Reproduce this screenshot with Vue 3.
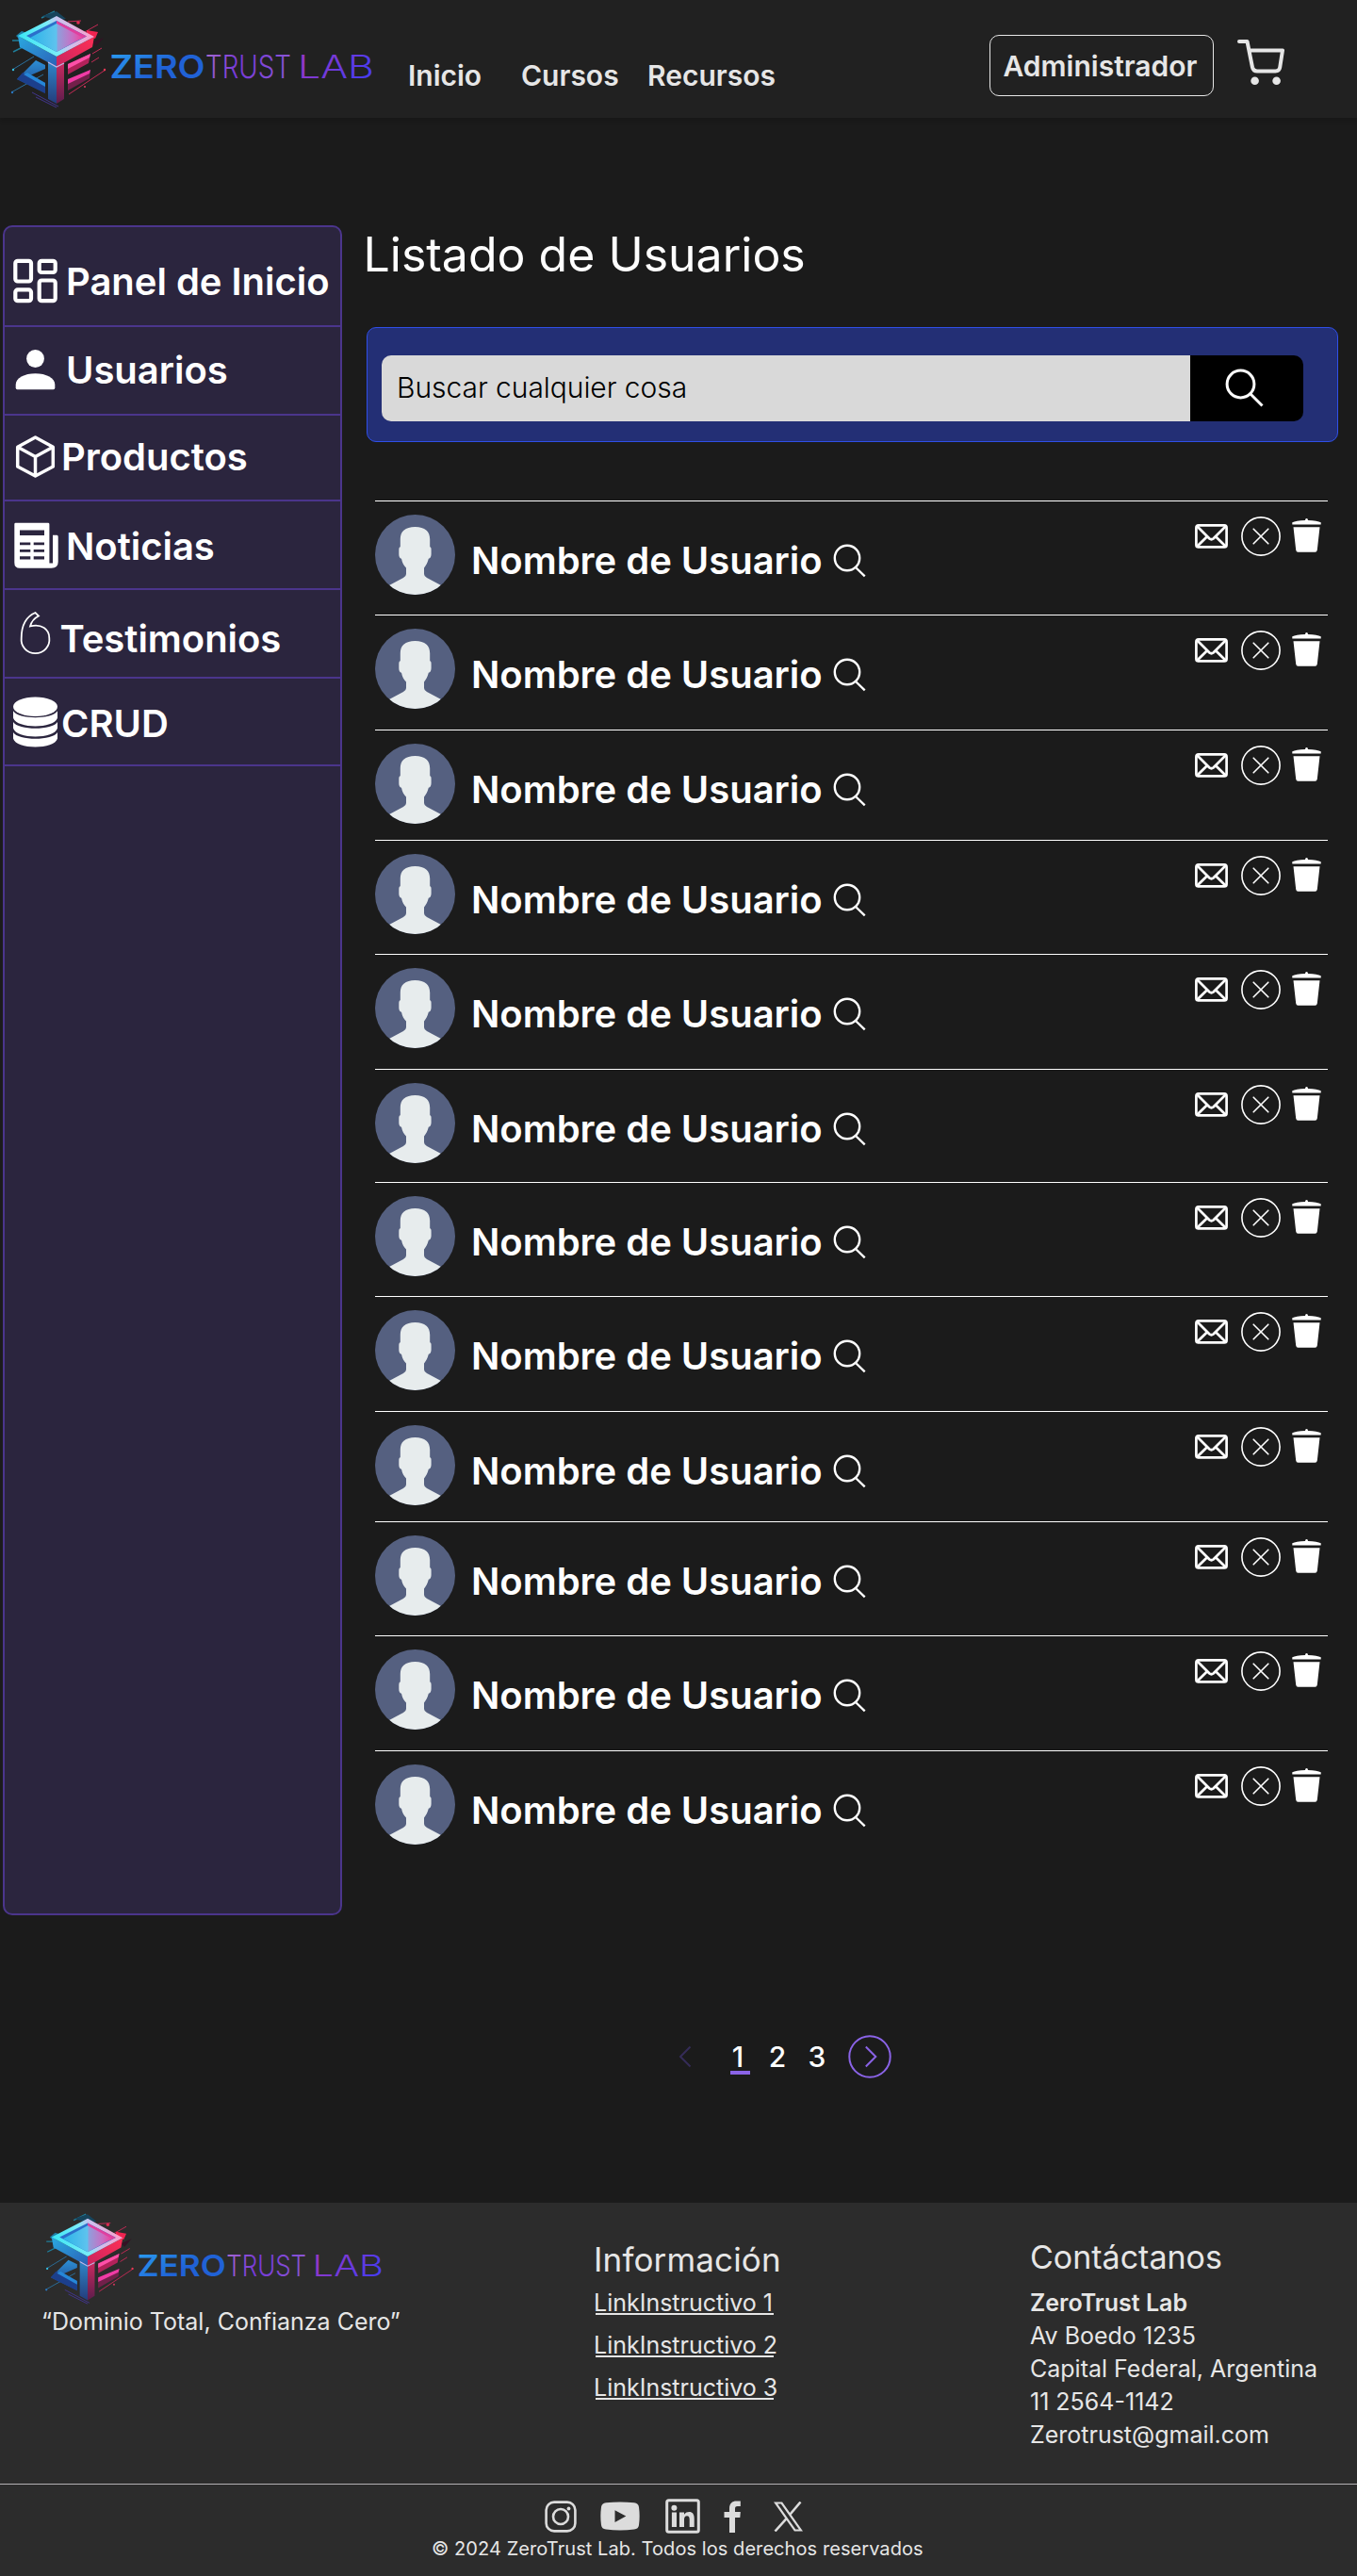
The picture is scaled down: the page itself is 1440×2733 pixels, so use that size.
<script setup>
const nav = ['Inicio', 'Cursos', 'Recursos']

const menu = [
  { id: 'panel', label: 'Panel de Inicio' },
  { id: 'usuarios', label: 'Usuarios' },
  { id: 'productos', label: 'Productos' },
  { id: 'noticias', label: 'Noticias' },
  { id: 'testimonios', label: 'Testimonios' },
  { id: 'crud', label: 'CRUD' },
]

const users = Array.from({ length: 12 }, (_, i) => ({ id: i + 1, name: 'Nombre de Usuario' }))

const links = ['LinkInstructivo 1', 'LinkInstructivo 2', 'LinkInstructivo 3']
const contact = ['Av Boedo 1235', 'Capital Federal, Argentina', '11 2564-1142', 'Zerotrust@gmail.com']
</script>

<template>
  <div class="page">
    <svg class="defs" width="0" height="0" aria-hidden="true">
      <defs>
        <linearGradient id="gFrame" x1="0" y1="0.6" x2="1" y2="0.4">
          <stop offset="0" stop-color="#35e6f5" /><stop offset="0.45" stop-color="#7cecf8" />
          <stop offset="0.6" stop-color="#c9c4f0" /><stop offset="1" stop-color="#ff9bc8" />
        </linearGradient>
        <linearGradient id="gInner" x1="0" y1="0.5" x2="1" y2="0.5">
          <stop offset="0" stop-color="#2bb4e8" /><stop offset="0.5" stop-color="#5fc3ee" />
          <stop offset="0.52" stop-color="#8f9fdc" /><stop offset="0.8" stop-color="#c86fc4" /><stop offset="1" stop-color="#f0409a" />
        </linearGradient>
        <linearGradient id="gLeft" x1="0" y1="0" x2="1" y2="1">
          <stop offset="0" stop-color="#2aa9e0" /><stop offset="1" stop-color="#2b62b8" />
        </linearGradient>
        <linearGradient id="gRight" x1="1" y1="0" x2="0" y2="1">
          <stop offset="0" stop-color="#ff2f55" /><stop offset="1" stop-color="#c92560" />
        </linearGradient>
        <linearGradient id="gArrow" x1="0.5" y1="0" x2="0.5" y2="1">
          <stop offset="0" stop-color="#2d8fd6" /><stop offset="1" stop-color="#1c3a80" />
        </linearGradient>
        <linearGradient id="gPillarL" x1="0" y1="0" x2="0" y2="1">
          <stop offset="0" stop-color="#2f86c8" /><stop offset="1" stop-color="#243c7c" />
        </linearGradient>
        <linearGradient id="gPillarR" x1="0" y1="0" x2="0" y2="1">
          <stop offset="0" stop-color="#c92a60" /><stop offset="1" stop-color="#5c1d4c" />
        </linearGradient>
        <linearGradient id="gZero" gradientUnits="userSpaceOnUse" x1="118" y1="56" x2="140" y2="92">
          <stop offset="0" stop-color="#2a9cf0" /><stop offset="1" stop-color="#2062d6" />
        </linearGradient>
        <linearGradient id="gTrust" gradientUnits="userSpaceOnUse" x1="217" y1="58" x2="308" y2="84">
          <stop offset="0" stop-color="#a76bd0" /><stop offset="0.4" stop-color="#7538d8" /><stop offset="1" stop-color="#8d5ad6" />
        </linearGradient>
        <linearGradient id="gLab" gradientUnits="userSpaceOnUse" x1="330" y1="56" x2="378" y2="92">
          <stop offset="0" stop-color="#9238c8" /><stop offset="1" stop-color="#4a3cf0" />
        </linearGradient>
      </defs>
      <symbol id="cube" viewBox="0 0 120 125">
        <g fill="none" stroke-width="1">
          <path d="M13 74 36 60M12 98 46 79" stroke="#2a6f9c" />
          <path d="M13 43h12M14 55l12-6M44 19l14-7" stroke="#1f7d99" stroke-width="1.4" />
          <path d="M88 35l16-9M72 23l14-1M98 57l10-6M97 66l8-5M73 100 112 74" stroke="#c42a55" />
          <path d="M34 98l28 15M38 103l22 11" stroke="#41358c" />
        </g>
        <path d="M45 17l15-5 10 8-10 2z" fill="#17445c" />
        <path d="M17 38l6-5 6 2-8 7z" fill="#1f7fa8" />
        <path d="M92 32l12 2-3 7-9-4z" fill="#f02450" />
        <path d="M98 45l12-5-8 9z" fill="#351225" />
        <circle cx="14" cy="74" r="1.2" fill="#35bfe0" /><circle cx="13" cy="98" r="1.2" fill="#2a76c0" />
        <circle cx="111" cy="74" r="1.2" fill="#ef3a55" /><circle cx="83" cy="24" r="1.8" fill="#e02a50" />
        <circle cx="90" cy="92" r="1" fill="#e03a60" />
        <path d="M19 38 60 60V71L21 50z" fill="url(#gLeft)" />
        <path d="M100 39 60 60V71L98 50z" fill="url(#gRight)" />
        <path d="M60 17 100 39 60 60 19 38z" fill="url(#gFrame)" />
        <path d="M60 22 92 38.5 60 55 28 38z" fill="#2b6fcb" />
        <path d="M60 22 92 38.5 84 42 60 26z" fill="#e0409f" />
        <path d="M60 25 88 40 60 55 32 40z" fill="url(#gInner)" />
        <path d="M38 64 48 69V73L32 80 48 88V99L18 84z" fill="url(#gArrow)" />
        <path d="M48 88V99L18 84 24 77z" fill="#1c3f8c" />
        <path d="M48 88v4L25 79l4-2z" fill="#2687d8" />
        <path d="M51 66 60 71V110L51 105z" fill="url(#gPillarL)" />
        <path d="M60 71 68 67V105L60 110z" fill="url(#gPillarR)" />
        <path d="M72 68 96 57 94 67 72 79z" fill="#b2225a" />
        <path d="M72 68 96 57 95 61 72 73z" fill="#ff4fa8" />
        <path d="M72 86 96 74 95 83 72 96z" fill="#72204a" />
        <path d="M72 84 96 74 95 78 72 89z" fill="#f03ba6" />
        <path d="M51 66 60 71 68 67" fill="none" stroke="#c6b8e8" stroke-width="1.2" />
      </symbol>
    </svg>

    <header class="topbar">
      <svg class="brand" viewBox="0 0 400 125" role="img" aria-label="ZeroTrust Lab">
        <use href="#cube" x="0" y="0" width="120" height="125" />
        <text class="logo-bold" x="116.500" y="83" textLength="101" lengthAdjust="spacingAndGlyphs" fill="url(#gZero)">ZERO</text>
        <text class="logo-thin" x="218" y="82.500" textLength="91" lengthAdjust="spacingAndGlyphs" fill="url(#gTrust)">TRUST</text>
        <text class="logo-thin" x="316" y="82.500" textLength="81" lengthAdjust="spacingAndGlyphs" fill="url(#gLab)">LAB</text>
      </svg>
      <nav class="nav">
        <a v-for="item in nav" :key="item">{{ item }}</a>
      </nav>
      <div class="admin">Administrador</div>
      <svg class="cart" viewBox="0 0 50 50">
        <path d="M2 3H10.500L16 30.500Q17 34.500 21 34.500H40.500Q44.500 34.500 45.200 30.500L48 12.500H13" fill="none" stroke="#e6e6e6" stroke-width="4" stroke-linecap="round" stroke-linejoin="round" />
        <circle cx="18.600" cy="44.700" r="4.300" fill="#e6e6e6" /><circle cx="41.600" cy="44.700" r="4.300" fill="#e6e6e6" />
      </svg>
    </header>

    <div class="body">
      <aside class="sidebar">
        <div v-for="m in menu" :key="m.id" class="entry" :class="m.id">
          <svg class="entry-icon" viewBox="0 0 50 56">
            <g v-if="m.id === 'panel'" fill="none" stroke="#fff" stroke-width="4.200">
              <rect x="4.300" y="5.800" width="16.700" height="21.700" rx="2.500" />
              <rect x="29.700" y="5.800" width="17" height="12.200" rx="2.500" />
              <rect x="4.300" y="36.400" width="16.700" height="11.800" rx="2.500" />
              <rect x="29.700" y="26.500" width="17" height="21.700" rx="2.500" />
            </g>
            <g v-else-if="m.id === 'usuarios'" fill="#fff">
              <circle cx="25.500" cy="15.500" r="9.400" />
              <path d="M4.700 43C4.700 36 14 31.200 25.500 31.200S46.300 36 46.300 43V46.500Q46.300 48.200 44.600 48.200H6.400Q4.700 48.200 4.700 46.500z" />
            </g>
            <path v-else-if="m.id === 'productos'" d="M25.500 7 44.300 17.200V38L25.500 48 6.700 38V17.200zM6.700 17.200 25.500 27.500 44.300 17.200M25.500 27.500V48" fill="none" stroke="#fff" stroke-width="3.500" stroke-linejoin="round" />
            <g v-else-if="m.id === 'noticias'">
              <path d="M4.500 2.800H39Q40.400 2.800 40.400 4.200V45.500H44V15.800H48.500Q49.700 15.800 49.700 17.500V44Q49.700 50.800 42.500 50.800H9Q3.300 50.800 3.300 45V4.200Q3.300 2.800 4.500 2.800z" fill="#fff" />
              <path d="M9 10.400H35V16H9zM9 23.500H20.300V26.300H9zM23.700 23.500H35V26.300H23.700zM9 31H20.300V33.800H9zM23.700 31H35V33.800H23.700zM9 38.200H20.300V41.500H9zM23.700 38.200H35V41.500H23.700z" fill="#2b253e" />
            </g>
            <path v-else-if="m.id === 'testimonios'" d="M25.500 0C15 4.500 10.700 15 10.700 27A14.900 14.500 0 1 0 40.300 27C40.300 17.500 32 11.500 20 14.500Q22 7 29 3.500z" fill="none" stroke="#fff" stroke-width="1.800" />
            <g v-else fill="#fff">
              <ellipse cx="25.500" cy="9.800" rx="23.500" ry="10.300" />
              <path d="M2 14.300C7 23.500 44 23.500 49 14.300V21.500C46 33.500 5 33.500 2 21.500z" />
              <path d="M2 26C7 35 44 35 49 26V32.500C46 44.500 5 44.500 2 32.500z" />
              <path d="M2 37C7 46 44 46 49 37V43.500C46 55.500 5 55.500 2 43.500z" />
            </g>
          </svg>
          <span class="entry-label">{{ m.label }}</span>
        </div>
      </aside>

      <main class="content">
        <h1 class="title">Listado de Usuarios</h1>

        <div class="search">
          <div class="search-input">Buscar cualquier cosa</div>
          <div class="search-btn">
            <svg viewBox="0 0 44 44"><circle cx="16.500" cy="16.500" r="14.400" /><path d="M27 27 39.500 39.500" /></svg>
          </div>
        </div>

        <ul class="users">
          <li v-for="u in users" :key="u.id" class="user">
            <svg class="avatar" viewBox="0 0 85 85">
              <clipPath :id="'av' + u.id"><circle cx="42.500" cy="42.500" r="42.500" /></clipPath>
              <circle cx="42.500" cy="42.500" r="42.500" fill="#556080" />
              <path :clip-path="'url(#av' + u.id + ')'" d="M42.500 13C53 13 58.200 18 58.200 26V34.200Q59.800 34.500 59.600 38V42Q59.500 46 56.800 46.800C55.500 51.500 54 54 52 56.500V63Q52 65.500 55 67L70 75V85H15V75L30 67Q33 65.500 33 63V56.500C30.500 54 29 51.500 28 46.800Q25.300 46 25.300 42V38Q25.200 34.500 26.800 34.200V26C26.800 18 32 13 42.500 13z" fill="#e7eced" />
            </svg>
            <span class="name">{{ u.name }}</span>
            <svg class="lens" viewBox="0 0 36 36"><circle cx="15" cy="15" r="13.200" /><path d="M24.500 25.500 33.700 34.300" /></svg>
            <div class="actions">
              <svg class="mail" viewBox="0 0 35 26" fill="none" stroke="#fff" stroke-width="2.700" stroke-linejoin="round">
                <rect x="1.400" y="1.400" width="32.200" height="23" rx="2.500" />
                <path d="M2 2 15.500 15.500Q17.500 17 19.500 15.500L33 2M2 24 13 13.300M33 24 22 13.300" />
              </svg>
              <svg class="block" viewBox="0 0 42 42" fill="none" stroke="#fff" stroke-width="1.600" stroke-linecap="round">
                <circle cx="21" cy="21" r="20.100" /><path d="M13.200 13.200 28.800 28.800M28.800 13.200 13.200 28.800" />
              </svg>
              <svg class="trash" viewBox="0 0 31 36" fill="#fff">
                <path d="M.3 4.300Q4 2 14 1.900Q14 0 15.500 0T17 1.900Q27 2 30.700 4.300V6.600H.3zM1.500 9.200H29.500L26.800 33.500Q26.500 35.800 24.500 35.800H6.500Q4.500 35.800 4.200 33.500z" />
              </svg>
            </div>
          </li>
        </ul>
      </main>
    </div>

    <div class="pager">
      <svg class="prev" viewBox="0 0 14 24"><path d="M12.500 1.500 2 12 12.500 22.500" /></svg>
      <span class="num current">1</span>
      <span class="num">2</span>
      <span class="num">3</span>
      <svg class="next" viewBox="0 0 46 46"><circle cx="23" cy="23" r="21.700" /><path d="M18.800 12.500 29.300 23 18.800 33.500" /></svg>
    </div>

    <footer class="footer">
      <div class="cols">
        <div class="about">
          <svg class="brand-sm" viewBox="0 0 400 125" role="img" aria-label="ZeroTrust Lab">
            <use href="#cube" x="0" y="0" width="120" height="125" />
            <text class="logo-bold" x="116.500" y="83" textLength="101" lengthAdjust="spacingAndGlyphs" fill="url(#gZero)">ZERO</text>
            <text class="logo-thin" x="218" y="82.500" textLength="91" lengthAdjust="spacingAndGlyphs" fill="url(#gTrust)">TRUST</text>
            <text class="logo-thin" x="316" y="82.500" textLength="81" lengthAdjust="spacingAndGlyphs" fill="url(#gLab)">LAB</text>
          </svg>
          <p class="motto">“Dominio Total, Confianza Cero”</p>
        </div>
        <div class="info">
          <h2>Información</h2>
          <a v-for="l in links" :key="l" class="link"><span>{{ l }}</span></a>
        </div>
        <div class="contact">
          <h2>Contáctanos</h2>
          <p class="strong">ZeroTrust Lab</p>
          <p v-for="c in contact" :key="c">{{ c }}</p>
        </div>
      </div>
      <div class="legal">
        <div class="social">
          <svg class="ig" viewBox="0 0 34 34" fill="none" stroke="#dcdcdc" stroke-width="2.600">
            <rect x="1.600" y="1.600" width="30.800" height="30.800" rx="8.500" /><circle cx="17" cy="17" r="8" /><circle cx="25.500" cy="8.500" r="1.900" fill="#dcdcdc" stroke="none" />
          </svg>
          <svg class="yt" viewBox="0 0 42 31">
            <path d="M6 1.300Q21-.5 36 1.300Q40.500 1.800 41 6Q42.300 15.500 41 25Q40.500 29 36 29.500Q21 31.300 6 29.500Q1.500 29 1 25Q-.3 15.500 1 6Q1.500 1.800 6 1.300z" fill="#dcdcdc" /><path d="M15.500 9.300 27.300 15.500 15.500 22z" fill="#2c2c2c" />
          </svg>
          <svg class="li" viewBox="0 0 37 37" fill="#dcdcdc">
            <rect x="1.700" y="1.700" width="33.600" height="33.600" rx="2" fill="none" stroke="#dcdcdc" stroke-width="3" />
            <circle cx="9.400" cy="9.800" r="3" /><path d="M6.900 14.500H12V30H6.900zM15 14.500H20V16.800C21.500 14.500 23.200 13.900 25.300 13.900C29 13.900 30.700 16.500 30.700 21V30H25.700V22C25.700 19.500 25 18.200 23 18.200S20 19.700 20 22V30H15z" />
          </svg>
          <svg class="fb" viewBox="0 0 18 34" fill="#dcdcdc">
            <path d="M6 34V18H.5V12H6V8.500C6 3 9 .5 13.500 .5H17.800V6H14.500C12.500 6 12 7 12 8.800V12H17.800L17.300 18H12V34z" />
          </svg>
          <svg class="tx" viewBox="0 0 31 32">
            <path d="M2 1.500H8.500L29 30.500H22.500z" fill="none" stroke="#dcdcdc" stroke-width="2.200" /><path d="M28.500 .5 17.500 13.500M13.300 18.300 1.500 31.500" stroke="#dcdcdc" stroke-width="2.600" fill="none" />
          </svg>
        </div>
        <p class="copy">© 2024 ZeroTrust Lab. Todos los derechos reservados</p>
      </div>
    </footer>
  </div>
</template>

<style>
html,
body {
  margin: 0;
  background: #1b1b1b;
}
</style>

<style scoped>
.page {
  width: 1440px;
  height: 2733px;
  display: flex;
  flex-direction: column;
  background: #1b1b1b;
  color: #fff;
  font-family: Inter, "Liberation Sans", sans-serif;
  overflow: hidden;
}
.defs { position: absolute; }
svg { display: block; flex: none; }
h1, h2, p, ul { margin: 0; padding: 0; }

/* Header */
.topbar {
  flex: none;
  height: 125px;
  display: flex;
  align-items: flex-start;
  background: #212121;
  box-shadow: 0 4px 4px rgba(0, 0, 0, 0.12);
  color: #e6e6e6;
  font-size: 30px;
  font-weight: 600;
  line-height: 36px;
}
.brand { width: 400px; height: 125px; }
.logo-bold, .logo-thin { font-size: 34px; font-family: Inter, sans-serif; }
.logo-bold { font-weight: 600; }
.logo-thin { font-weight: 300; }
.nav { display: flex; padding: 62px 0 0 33px; width: 618px; box-sizing: border-box; }
.nav a:nth-child(1) { width: 120px; }
.nav a:nth-child(2) { width: 134px; }
.admin, .nav a { white-space: nowrap; }
.admin {
  margin: 37px 0 0 32px;
  width: 238px;
  height: 65px;
  box-sizing: border-box;
  border: 1px solid #e6e6e6;
  border-radius: 10px;
  padding: 13.500px 0 0 13.500px;
}
.cart { width: 50px; height: 50px; margin: 41px 0 0 25px; }

/* Columns under the header */
.body {
  flex: none;
  display: flex;
  align-items: flex-start;
  height: 1908px;
  padding: 114px 20px 0 3px;
}
.sidebar {
  flex: none;
  width: 360px;
  height: 1793px;
  box-sizing: border-box;
  border: 2px solid #4b358c;
  border-radius: 10px;
  background: #2b253e;
}
.entry {
  box-sizing: border-box;
  display: flex;
  align-items: flex-start;
  border-bottom: 2px solid #4b358c;
  padding-left: 7px;
}
.entry-icon { width: 50px; height: 56px; overflow: visible; }
.entry-label { font-size: 40px; font-weight: 600; line-height: 56px; white-space: nowrap; margin-left: 8px; letter-spacing: -0.030px; }
.panel { height: 106px; padding-top: 29.500px; }
.usuarios { height: 94px; padding-top: 17.500px; }
.productos { height: 91px; padding-top: 15.500px; }
.noticias { height: 94px; padding-top: 19.500px; }
.testimonios { height: 94px; padding-top: 24px; }
.crud { height: 93px; padding-top: 19.500px; }
.productos .entry-label { margin-left: 3px; }
.testimonios .entry-label { margin-left: 1.500px; }
.crud .entry-label { margin-left: 3px; }

.content { flex: none; width: 1031px; margin-left: 26px; }
.title {
  margin: 1px 0 0 -3.500px;
  font-size: 50px;
  font-weight: 400;
  line-height: 60px;
  white-space: nowrap;
}
.search {
  display: flex;
  box-sizing: border-box;
  height: 122px;
  margin-top: 47px;
  padding: 29px 0 0 15px;
  border: 1px solid #2f4fe8;
  border-radius: 10px;
  background: #232f75;
}
.search-input {
  width: 858px;
  height: 70px;
  box-sizing: border-box;
  padding-left: 16px;
  border-radius: 10px 0 0 10px;
  background: #d9d9d9;
  color: #000;
  font-size: 30px;
  font-weight: 300;
  line-height: 69px;
  letter-spacing: -0.050px;
}
.search-btn { width: 120px; height: 70px; border-radius: 0 10px 10px 0; background: #000; }
.search-btn svg { width: 44px; height: 44px; margin: 14px 0 0 36.500px; fill: none; stroke: #fff; stroke-width: 3; }

.users { list-style: none; width: 1011px; margin: 62px 0 0 9px; }
.user {
  display: flex;
  align-items: flex-start;
  height: 122px;
  box-sizing: border-box;
  border-top: 1px solid #fff;
}
.user:nth-child(3n + 1) { height: 121px; }
.user:nth-child(3n) { height: 117px; }
.user:nth-child(6) { height: 120px; }
.avatar { width: 85px; height: 85px; margin-top: 14px; }
.name {
  margin: 38.500px 0 0 17px;
  width: 386px;
  font-size: 40px;
  font-weight: 600;
  line-height: 48px;
  white-space: nowrap;
  letter-spacing: -0.030px;
}
.lens { width: 36px; height: 36px; margin: 45px 0 0 -2px; fill: none; stroke: #fff; stroke-width: 2.400; }
.actions { display: flex; margin-left: 348px; }
.mail { width: 35px; height: 26px; margin-top: 24px; }
.block { width: 42px; height: 42px; margin: 15.500px 0 0 14px; }
.trash { width: 31px; height: 36px; margin: 18px 0 0 12px; }

/* Pagination */
.pager {
  flex: none;
  height: 190px;
  display: flex;
  align-items: flex-start;
  padding-left: 720px;
  font-size: 30px;
  font-weight: 500;
  line-height: 36px;
  box-sizing: border-box;
  padding-top: 17px;
}
.prev { width: 14px; height: 24px; margin-top: 5.500px; }
.prev path { fill: none; stroke: #352c58; stroke-width: 2; }
.num { height: 36px; margin-left: 21px; width: 21px; text-align: center; text-indent: -5px; }
.current { margin-left: 41px; height: 33px; border-bottom: 4px solid #8a63e6; }
.next { width: 46px; height: 46px; margin: -5.500px 0 0 19.500px; fill: none; stroke: #8a63e6; stroke-width: 2; }

/* Footer */
.footer { flex: none; height: 396px; background: #2c2c2c; color: #e6e6e6; }
.cols { display: flex; align-items: flex-start; height: 298px; }
.about { width: 630px; }
.brand-sm { width: 373px; height: 116.500px; margin: 1px 0 0 37px; }
.motto { margin: -6.500px 0 0 44px; font-size: 25px; line-height: 30px; font-weight: 400; white-space: nowrap; }
h2 { font-size: 35px; font-weight: 400; line-height: 42px; white-space: nowrap; }
.info { width: 463px; padding-top: 39px; }
.info h2 { letter-spacing: 0.150px; }
.link { display: block; height: 45px; line-height: 30px; font-size: 25px; font-weight: 400; }
.link span { display: block; width: 189px; height: 27.500px; margin-left: 2px; border-bottom: 2px solid #e6e6e6; text-indent: -2px; white-space: nowrap; box-sizing: border-box; }
.info h2 + .link { margin-top: 10px; }
.contact { padding-top: 37px; font-size: 25px; font-weight: 400; line-height: 35px; white-space: nowrap; }
.contact h2 { margin-bottom: 10px; font-size: 34px; }
.contact .strong { font-weight: 600; }
.legal { height: 98px; box-sizing: border-box; border-top: 1px solid #b3b0b3; }
.social { display: flex; align-items: center; height: 37px; padding: 15px 0 0 578px; }
.ig { width: 34px; height: 34px; }
.yt { width: 42px; height: 31px; margin-left: 25px; }
.li { width: 37px; height: 37px; margin-left: 26.500px; }
.fb { width: 18px; height: 34px; margin-left: 25px; }
.tx { width: 31px; height: 32px; margin-left: 35px; }
.copy { margin: 4px 0 0 458px; font-size: 20px; line-height: 24px; font-weight: 400; letter-spacing: 0.070px; white-space: nowrap; }
</style>
